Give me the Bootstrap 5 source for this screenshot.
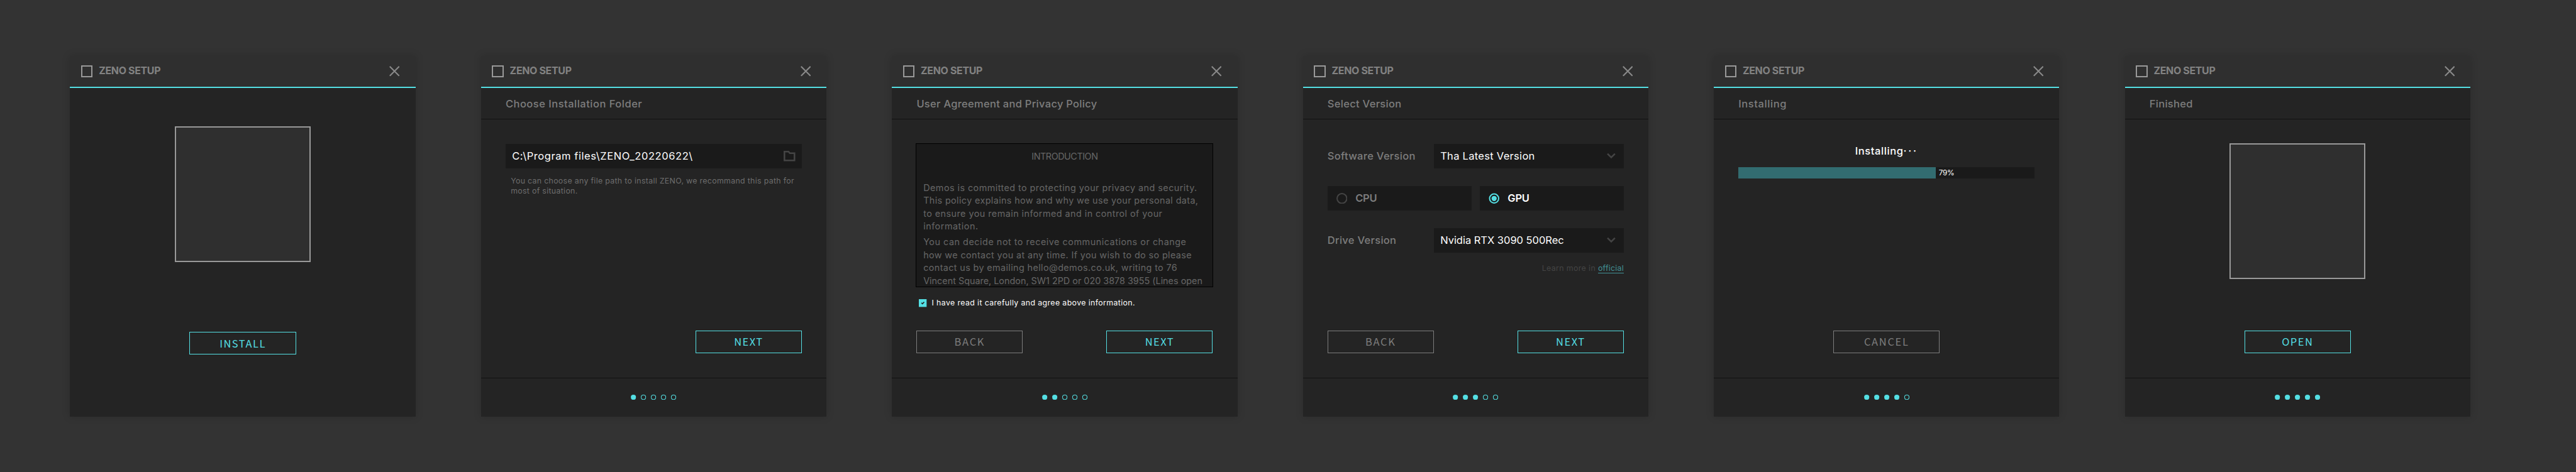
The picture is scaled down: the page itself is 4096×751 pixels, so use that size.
<!DOCTYPE html>
<html lang="en">
<head>
<meta charset="utf-8">
<meta name="viewport" content="width=device-width, initial-scale=1">
<title>ZENO Setup</title>
<link href="https://cdn.jsdelivr.net/npm/bootstrap@5.3.0/dist/css/bootstrap.min.css" rel="stylesheet">
<style>
/* 1rem = 10 design units */
html{font-size:5.1535px}
body{background:#333;color:#fff;font-family:Inter,"Open Sans",sans-serif;font-size:3.2rem;line-height:4rem;overflow:hidden}
.board{padding:17.2rem 0 0 21.6rem;gap:20.2rem;height:751px}

/* installer window */
.win{width:106.6rem;height:111.4rem;flex:none;background:#242424;box-shadow:0 0 2.4rem rgba(0,0,0,.16)}
.win-head{height:10rem;background:#2f2f2f;border-bottom:2px solid #54dfe3;padding:0 4.8rem 0 3.4rem;color:#828282;font-size:3.1rem;font-weight:700;letter-spacing:-.021em}
.logo-box{width:3.6rem;height:3.6rem;border:2px solid #999;margin-right:1.9rem}
.win-sub{height:9.6rem;border-bottom:1px solid #121212;padding:.4rem 7.6rem 0;color:#7d7d7d;font-weight:500}
.win-body{padding:7.6rem}
.win-body.welcome{padding-top:11.8rem;padding-bottom:19.2rem}
.win-foot{height:12rem;border-top:1px solid #121212}
.ico-close{width:3.2rem;height:3.2rem}
.dots{width:14rem;height:1.6rem}

/* controls */
.zbtn{width:32.8rem;height:7rem;border:1px solid #54dfe3;border-radius:0;color:#54dfe3;background:transparent;padding:0;font:400 3.2rem/1 "Noto Sans CJK SC",sans-serif;letter-spacing:.09em}
.zbtn.off{border-color:#7d7d7d;color:#7d7d7d;letter-spacing:.102em}
.preview{width:42rem;height:42rem;background:#2f2f2f;border:2px solid #999}
.preview.raised{margin-top:-.2rem}
.field{height:7.6rem;background:#1a1a1a;padding:0 2rem;white-space:nowrap}
.ico-folder{width:3.6rem;height:3.2rem}
.ico-chev{width:2.7rem;height:1.9rem;margin-right:.5rem}
.hint{font-size:2.4rem;line-height:3.15rem;color:#6e6e6e;margin:2.3rem 0 0 1.6rem;white-space:nowrap}
.policy{width:91.8rem;height:44.4rem;margin:-.2rem -.2rem 0;background:#1a1a1a;border:1px solid #000;padding:2rem 1.5rem 0 2.1rem;font-size:2.8rem;line-height:4rem;color:#666;overflow:hidden;white-space:nowrap}
.policy h6{font-size:inherit;line-height:inherit;font-weight:400;margin:0 0 5.6rem -.6rem;letter-spacing:-.033em}
.policy p{margin:0 0 .8rem}
.agree{margin-top:3.8rem;height:2.4rem;font-size:2.4rem;padding-left:.8rem}
.agree svg{width:2.4rem;height:2.4rem;margin-right:1.5rem}
.lab{color:#7d7d7d;font-weight:500;width:32.8rem}
.pick{width:58.6rem}
.radio-row{margin:5.4rem 0}
.radio-cell{width:44.4rem;padding:0 2.7rem;font-weight:600;letter-spacing:-.015em}
.radio-cell svg{width:3.4rem;height:3.4rem;margin-right:2.5rem}
.dim{color:#7d7d7d}
.learn{font-size:2.4rem;line-height:3rem;color:#444;margin-top:3.4rem}
.learn a{display:inline-block;color:#429297;text-decoration:none;border-bottom:1px solid #429297;line-height:2.7rem;letter-spacing:.019em}
.status{padding-top:.3rem;font-weight:500}
.bar{height:3.6rem;background:#1a1a1a;font-size:2.3rem;letter-spacing:-.03em;margin-top:2.85rem}
.bar-fill{background:#326c70;margin-right:1rem}

/* tracking */
.ls-0{letter-spacing:-.001em}
.ls-2{letter-spacing:.018em}
.ls-25{letter-spacing:.025em}
.ls-3{letter-spacing:.03em}
.ls-35{letter-spacing:.035em}
.ls-17{letter-spacing:.17em}
</style>
</head>
<body>
<svg class="d-none">
  <symbol id="close" viewBox="0 0 32 32"><path d="M1.500 1.500l29 29M30.500 1.500l-29 29" stroke="#8a8a8a" stroke-width="4" fill="none"/></symbol>
  <symbol id="chev" viewBox="0 0 27 19"><path d="M2 3l11.500 11.500L25 3" stroke="#444" stroke-width="5" fill="none"/></symbol>
  <circle id="on" cy="8" r="8" fill="#54dfe3"/>
  <circle id="off" cy="8" r="7" fill="none" stroke="#54dfe3" stroke-width="2"/>
</svg>

<div class="board d-flex">

  <section class="win d-flex flex-column">
    <header class="win-head d-flex align-items-center"><div class="logo-box"></div>ZENO SETUP<svg class="ico-close ms-auto"><use href="#close"/></svg></header>
    <div class="win-body welcome flex-grow-1 d-flex flex-column align-items-center">
      <div class="preview"></div>
      <button class="btn zbtn mt-auto">INSTALL</button>
    </div>
  </section>

  <section class="win d-flex flex-column">
    <header class="win-head d-flex align-items-center"><div class="logo-box"></div>ZENO SETUP<svg class="ico-close ms-auto"><use href="#close"/></svg></header>
    <div class="win-sub d-flex align-items-center ls-3">Choose Installation Folder</div>
    <div class="win-body flex-grow-1 d-flex flex-column">
      <div class="field d-flex align-items-center ls-35">C:\Program files\ZENO_20220622\
        <svg class="ico-folder ms-auto" viewBox="0 0 36 32"><path d="M2.500 29.500v-27H15l4 4.700h14.500v22.300z" stroke="#444" stroke-width="5" fill="none"/></svg>
      </div>
      <div class="hint ls-25">You can choose any file path to install ZENO, we recommand this path for<br>most of situation.</div>
      <div class="mt-auto d-flex justify-content-end"><button class="btn zbtn">NEXT</button></div>
    </div>
    <footer class="win-foot d-flex align-items-center justify-content-center"><svg class="dots" viewBox="0 0 140 16"><use href="#on" x="8"/><use href="#off" x="39"/><use href="#off" x="70"/><use href="#off" x="101"/><use href="#off" x="132"/></svg></footer>
  </section>

  <section class="win d-flex flex-column">
    <header class="win-head d-flex align-items-center"><div class="logo-box"></div>ZENO SETUP<svg class="ico-close ms-auto"><use href="#close"/></svg></header>
    <div class="win-sub d-flex align-items-center ls-2">User Agreement and Privacy Policy</div>
    <div class="win-body flex-grow-1 d-flex flex-column">
      <div class="policy">
        <h6 class="text-center">INTRODUCTION</h6>
        <p><span class="ls-3">Demos is committed to protecting your privacy and security.</span><br>
        <span class="ls-25">This policy explains how and why we use your personal data,</span><br>
        <span class="ls-3">to ensure you remain informed and in control of your</span><br>
        <span class="ls-35">information.</span></p>
        <p><span class="ls-35">You can decide not to receive communications or change</span><br>
        <span class="ls-25">how we contact you at any time. If you wish to do so please</span><br>
        <span class="ls-25">contact us by emailing hello@demos.co.uk, writing to 76</span><br>
        <span class="ls-0">Vincent Square, London, SW1 2PD or 020 3878 3955 (Lines open</span></p>
      </div>
      <div class="agree d-flex align-items-center ls-3">
        <svg viewBox="0 0 24 24"><path d="M0 0h24v24H0z" fill="#54dfe3"/><path d="M8 11l3 3.200 5.500-5.200" stroke="#242424" stroke-width="3" fill="none"/></svg>I have read it carefully and agree above information.
      </div>
      <div class="mt-auto d-flex justify-content-between"><button class="btn zbtn off">BACK</button><button class="btn zbtn">NEXT</button></div>
    </div>
    <footer class="win-foot d-flex align-items-center justify-content-center"><svg class="dots" viewBox="0 0 140 16"><use href="#on" x="8"/><use href="#on" x="39"/><use href="#off" x="70"/><use href="#off" x="101"/><use href="#off" x="132"/></svg></footer>
  </section>

  <section class="win d-flex flex-column">
    <header class="win-head d-flex align-items-center"><div class="logo-box"></div>ZENO SETUP<svg class="ico-close ms-auto"><use href="#close"/></svg></header>
    <div class="win-sub d-flex align-items-center ls-2">Select Version</div>
    <div class="win-body flex-grow-1 d-flex flex-column">
      <div class="d-flex align-items-center">
        <div class="lab ls-2">Software Version</div>
        <div class="field pick d-flex align-items-center ls-2">Tha Latest Version<svg class="ico-chev ms-auto"><use href="#chev"/></svg></div>
      </div>
      <div class="radio-row d-flex justify-content-between">
        <div class="field radio-cell dim d-flex align-items-center"><svg viewBox="0 0 34 34"><circle cx="17" cy="17" r="15" stroke="#444" stroke-width="4" fill="none"/></svg>CPU</div>
        <div class="field radio-cell d-flex align-items-center"><svg viewBox="0 0 34 34"><circle cx="17" cy="17" r="14" stroke="#54dfe3" stroke-width="4" fill="none"/><circle cx="17" cy="17" r="8" fill="#54dfe3"/></svg>GPU</div>
      </div>
      <div class="d-flex align-items-center">
        <div class="lab ls-2">Drive Version</div>
        <div class="field pick d-flex align-items-center ls-0">Nvidia RTX 3090 500Rec<svg class="ico-chev ms-auto"><use href="#chev"/></svg></div>
      </div>
      <div class="learn text-end ls-3">Learn more in <a href="#">official</a></div>
      <div class="mt-auto d-flex justify-content-between"><button class="btn zbtn off">BACK</button><button class="btn zbtn">NEXT</button></div>
    </div>
    <footer class="win-foot d-flex align-items-center justify-content-center"><svg class="dots" viewBox="0 0 140 16"><use href="#on" x="8"/><use href="#on" x="39"/><use href="#on" x="70"/><use href="#off" x="101"/><use href="#off" x="132"/></svg></footer>
  </section>

  <section class="win d-flex flex-column">
    <header class="win-head d-flex align-items-center"><div class="logo-box"></div>ZENO SETUP<svg class="ico-close ms-auto"><use href="#close"/></svg></header>
    <div class="win-sub d-flex align-items-center ls-35">Installing</div>
    <div class="win-body flex-grow-1 d-flex flex-column">
      <div class="status text-center ls-35">Installing<span class="ls-17">···</span></div>
      <div class="bar d-flex align-items-center"><div class="bar-fill h-100" style="width:66.5%"></div>79%</div>
      <div class="mt-auto d-flex justify-content-center"><button class="btn zbtn off">CANCEL</button></div>
    </div>
    <footer class="win-foot d-flex align-items-center justify-content-center"><svg class="dots" viewBox="0 0 140 16"><use href="#on" x="8"/><use href="#on" x="39"/><use href="#on" x="70"/><use href="#on" x="101"/><use href="#off" x="132"/></svg></footer>
  </section>

  <section class="win d-flex flex-column">
    <header class="win-head d-flex align-items-center"><div class="logo-box"></div>ZENO SETUP<svg class="ico-close ms-auto"><use href="#close"/></svg></header>
    <div class="win-sub d-flex align-items-center ls-2">Finished</div>
    <div class="win-body flex-grow-1 d-flex flex-column align-items-center">
      <div class="preview raised"></div>
      <button class="btn zbtn mt-auto">OPEN</button>
    </div>
    <footer class="win-foot d-flex align-items-center justify-content-center"><svg class="dots" viewBox="0 0 140 16"><use href="#on" x="8"/><use href="#on" x="39"/><use href="#on" x="70"/><use href="#on" x="101"/><use href="#on" x="132"/></svg></footer>
  </section>

</div>
<script src="https://cdn.jsdelivr.net/npm/bootstrap@5.3.0/dist/js/bootstrap.bundle.min.js"></script>
</body>
</html>
